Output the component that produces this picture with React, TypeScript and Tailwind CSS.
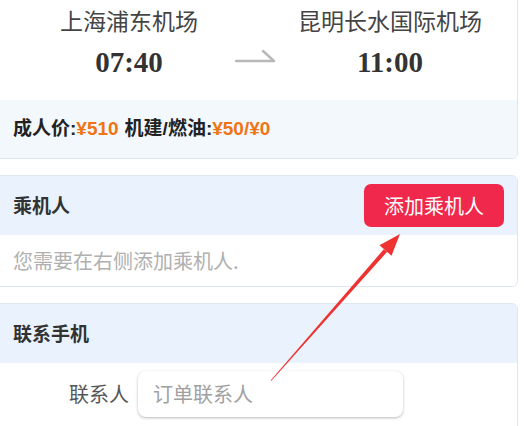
import React from 'react';

const font = { fontFamily: '"Noto Sans CJK SC", "Noto Sans", sans-serif' };

function FlightCard() {
  return (
    <div className="-mt-[10px] -ml-[6px] w-[524px] border border-[#dce7f2] rounded-[6px] overflow-hidden bg-white">
      <div className="h-[109px] pt-[14px] flex">
        <div className="w-[200px] ml-[34px] flex flex-col items-center">
          <div className="text-[23px] leading-[30px] text-[#444]">上海浦东机场</div>
          <div className="mt-[10px] text-[29px] leading-[34px] font-bold text-[#333] font-['Liberation_Serif',serif]">07:40</div>
        </div>
        <div className="w-[52px] pl-[6px] pt-[43px]">
          <svg width="42" height="16" viewBox="0 0 42 16">
            <path d="M1 13 L39 13 L28 3" fill="none" stroke="#b8b8b8" strokeWidth="2.4" strokeLinecap="round" strokeLinejoin="round" />
          </svg>
        </div>
        <div className="w-[218px] flex flex-col items-center">
          <div className="text-[23px] leading-[30px] text-[#444]">昆明长水国际机场</div>
          <div className="mt-[10px] text-[29px] leading-[34px] font-bold text-[#333] font-['Liberation_Serif',serif]">11:00</div>
        </div>
      </div>
      <div className="h-[58px] bg-[#f3f8fd] flex items-center pl-[18px] text-[19px] font-bold text-[#222] font-['Liberation_Sans','Noto_Sans_CJK_SC',sans-serif]">
        <span>成人价:</span>
        <span className="text-[#f07414]">¥510</span>
        <span className="ml-[6px]">机建/燃油:</span>
        <span className="text-[#f07414]">¥50/¥0</span>
      </div>
    </div>
  );
}

function PassengerCard() {
  return (
    <div className="mt-[16px] -ml-[6px] w-[524px] border border-[#dce7f2] rounded-[6px] overflow-hidden bg-white">
      <div className="h-[59px] bg-[#eaf3fd] flex items-center justify-between pl-[18px] pr-[13px]">
        <span className="text-[19px] font-bold text-[#333]">乘机人</span>
        <button className="w-[140px] h-[43px] rounded-[7px] bg-[#f0284b] text-white text-[20px]">添加乘机人</button>
      </div>
      <div className="h-[51px] flex items-center pl-[18px] text-[20px] text-[#b0b0b0]">
        您需要在右侧添加乘机人.
      </div>
    </div>
  );
}

function ContactCard() {
  return (
    <div className="mt-[16px] -ml-[6px] w-[524px] border border-[#dce7f2] rounded-[6px] overflow-hidden bg-white">
      <div className="h-[59px] bg-[#eaf3fd] flex items-center pl-[18px]">
        <span className="text-[19px] font-bold text-[#333]">联系手机</span>
      </div>
      <div className="h-[80px] pt-[8px] flex items-start">
        <div className="w-[143px] h-[46px] pr-[9px] flex items-center justify-end text-[20px] text-[#555]">联系人</div>
        <div className="w-[265px] h-[46px] rounded-[8px] bg-white shadow-[0_1px_3px_rgba(0,0,0,0.28)] flex items-center pl-[15px] text-[20px] text-[#a0a0a0]">
          订单联系人
        </div>
      </div>
    </div>
  );
}

export default function App() {
  return (
    <div className="relative w-[524px] h-[426px] overflow-hidden bg-white" style={font}>
      <FlightCard />
      <PassengerCard />
      <ContactCard />
      <svg className="absolute left-0 top-0 pointer-events-none" width="524" height="426" viewBox="0 0 524 426">
        <polygon points="270.6,380.4 271.4,380.8 387.2,251.8 383.8,249.2" fill="#ee3232" />
        <polygon points="400,234 379.5,245.2 391.5,255.8" fill="#ee3232" />
      </svg>
    </div>
  );
}
